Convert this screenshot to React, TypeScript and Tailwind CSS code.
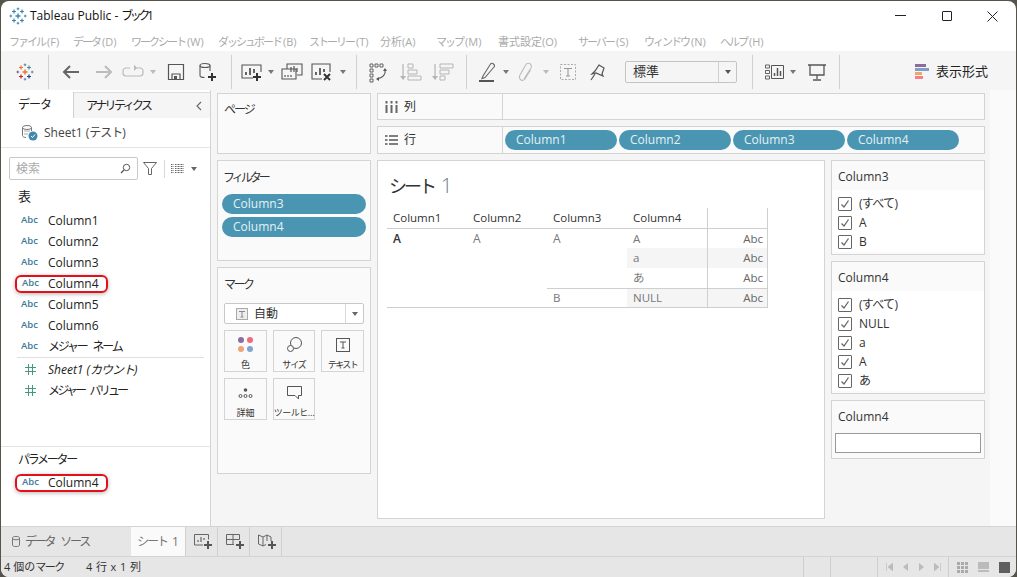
import React from "react";

const FONT = "[font-family:'Open_Sans','Noto_Sans_CJK_JP',sans-serif]";

function Cross({ x, y, r, c, w = 1.4 }: { x: number; y: number; r: number; c: string; w?: number }) {
  return <path d={`M${x - r} ${y}H${x + r}M${x} ${y - r}V${y + r}`} stroke={c} strokeWidth={w} fill="none" />;
}

function TableauLogo({ mono = false }: { mono?: boolean }) {
  const a = mono ? "#3f86ad" : "#e8762d";
  const b = mono ? "#3f86ad" : "#5b879b";
  const c = mono ? "#3f86ad" : "#c72035";
  const d = mono ? "#3f86ad" : "#1f447e";
  const e = mono ? "#3f86ad" : "#59879b";
  return (
    <svg width="18" height="18" viewBox="0 0 18 18">
      <Cross x={9} y={9} r={2.5} c={a} />
      <Cross x={5} y={4.5} r={2} c={a} w={1.2} />
      <Cross x={13} y={4.5} r={2} c={b} w={1.2} />
      <Cross x={5} y={13.5} r={2} c={c} w={1.2} />
      <Cross x={13} y={13.5} r={2} c={d} w={1.2} />
      <Cross x={9} y={1.8} r={1.3} c={e} w={1} />
      <Cross x={9} y={16.2} r={1.3} c={e} w={1} />
      <Cross x={1.8} y={9} r={1.3} c={mono ? a : "#7a4e7e"} w={1} />
      <Cross x={16.2} y={9} r={1.3} c={e} w={1} />
    </svg>
  );
}

function Caret({ ml = 0, color = "border-t-[#777]" }: { ml?: number; color?: string }) {
  return (
    <span
      style={{ marginLeft: ml }}
      className={`w-0 h-0 shrink-0 border-x-[3.5px] border-x-transparent border-t-[4px] ${color}`}
    />
  );
}

function Sep({ ml }: { ml: number }) {
  return <span style={{ marginLeft: ml }} className="w-px h-[34px] bg-[#d0d0d0] shrink-0" />;
}

function Ico({ ml, w = 24, children }: { ml: number; w?: number; children: React.ReactNode }) {
  return (
    <svg style={{ marginLeft: ml }} width={w} height="24" viewBox={`0 0 ${w} 24`} fill="none" className="shrink-0">
      {children}
    </svg>
  );
}

function MenuItem({ w, kana, rest, plain }: { w: string; kana: string; rest: string; plain?: boolean }) {
  return (
    <span className={w}>
      <span className={plain ? "" : "tracking-[-2px]"}>{kana}</span>
      <span className={plain ? "" : "ml-[2px]"}>{rest}</span>
    </span>
  );
}

function Toolbar() {
  return (
    <div className="h-[39px] bg-[#f5f5f5] flex items-center pt-[2px] shrink-0">
      <span className="ml-[15px] shrink-0 flex"><TableauLogo /></span>
      <Sep ml={14} />
      {/* back */}
      <Ico ml={10}><path d="M20 12H5M11 6l-6 6 6 6" stroke="#666" strokeWidth="2" /></Ico>
      {/* forward */}
      <Ico ml={9}><path d="M4 12h15M13 6l6 6-6 6" stroke="#bbb" strokeWidth="2" /></Ico>
      {/* loop */}
      <Ico ml={5}>
        <path d="M9 8H5a3 3 0 0 0-3 3v2a3 3 0 0 0 3 3h14a3 3 0 0 0 3-3v-2a3 3 0 0 0-3-3h-5" stroke="#bbb" strokeWidth="1.2" />
        <path d="M13 4.5 16 8l-3 3z" fill="#bbb" />
      </Ico>
      <Caret ml={5} color="border-t-[#bbb]" />
      {/* save */}
      <Ico ml={8}>
        <path d="M4.5 4.5h15v15h-15z" stroke="#555" strokeWidth="1.2" />
        <path d="M8 19v-5h8v5" stroke="#555" strokeWidth="1.2" />
        <path d="M10 16h3v3h-3z" fill="#555" />
      </Ico>
      {/* new data source */}
      <Ico ml={8}>
        <ellipse cx="9" cy="5.5" rx="5" ry="2" stroke="#555" strokeWidth="1.1" />
        <path d="M4 5.5v10c0 1.2 2 2 4.5 2M14 5.500V11" stroke="#555" strokeWidth="1.1" />
        <path d="M16 13v8M12 17h8" stroke="#333" strokeWidth="2" />
      </Ico>
      <Sep ml={11} />
      {/* new worksheet */}
      <Ico ml={8}>
        <path d="M13 18H2V5h19v7" stroke="#555" strokeWidth="1.1" />
        <path d="M6 15v-3M10 15V8M14 13V9" stroke="#555" strokeWidth="1.8" />
        <path d="M17 13v8M13 17h8" stroke="#333" strokeWidth="2" />
      </Ico>
      <Caret ml={4} />
      {/* duplicate */}
      <Ico ml={6}>
        <path d="M7 9V4h15v11h-5" stroke="#555" strokeWidth="1.1" />
        <path d="M2 9h14v10H2z" stroke="#555" strokeWidth="1.1" fill="#f5f5f5" />
        <path d="M11 12V7M14 12V6M17 12V8M5 17v-2M8 17v-2M11 17v-2" stroke="#555" strokeWidth="1.2" />
      </Ico>
      {/* clear */}
      <Ico ml={6}>
        <path d="M12 19H2V4h18v8" stroke="#555" strokeWidth="1.1" />
        <path d="M6 15v-3M10 15V8M14 12V9" stroke="#555" strokeWidth="1.8" />
        <path d="M14 14l6 6M20 14l-6 6" stroke="#333" strokeWidth="2" />
      </Ico>
      <Caret ml={6} />
      <Sep ml={10} />
      {/* swap */}
      <Ico ml={9}>
        <path d="M4 4h3v3H4zM9 4h3v3H9zM14 4h3v3h-3zM4 9h3v3H4zM4 14h3v3H4zM4 19h3v3H4z" stroke="#555" strokeWidth="0.9" />
        <path d="M19 10c1 4-2 8-8 9" stroke="#555" strokeWidth="1.1" />
        <path d="M17 11l2-3 2 3zM13 17v4l-3-2z" fill="#555" />
      </Ico>
      {/* sort asc */}
      <Ico ml={9}>
        <path d="M4 4v15" stroke="#b5b5b5" strokeWidth="1.2" />
        <path d="M1 16h6l-3 4z" fill="#b5b5b5" />
        <path d="M9 4h5v4H9zM9 10h9v4H9zM9 16h13v4H9z" stroke="#b5b5b5" strokeWidth="1" />
      </Ico>
      {/* sort desc */}
      <Ico ml={8}>
        <path d="M4 4v15" stroke="#b5b5b5" strokeWidth="1.2" />
        <path d="M1 16h6l-3 4z" fill="#b5b5b5" />
        <path d="M9 4h13v4H9zM9 10h9v4H9zM9 16h5v4H9z" stroke="#b5b5b5" strokeWidth="1" />
      </Ico>
      <Sep ml={11} />
      {/* highlight */}
      <Ico ml={8}>
        <path d="M8 16l-1 2.500 3-1L19 7c1-1 .5-2-.5-3s-2-1-3 0z" stroke="#666" strokeWidth="1.1" />
        <path d="M4 21h15" stroke="#555" strokeWidth="2" />
      </Ico>
      <Caret ml={4} />
      {/* clip */}
      <Ico ml={4} w={24}>
        <path d="M9 19l7-11c1-2 0-4-1.500-4.500S11 4 10 6l-5 9c-1 2-.5 4 1 5s3.500 0 4.500-2l5-8" stroke="#bbb" strokeWidth="1.1" transform="translate(2 0)" />
      </Ico>
      <Caret ml={6} color="border-t-[#bbb]" />
      {/* text box */}
      <Ico ml={7}>
        <path d="M4.500 4.500h15v15h-15z" stroke="#aaa" strokeWidth="1" strokeDasharray="2 1.500" />
        <path d="M8 8.500h8M12 8.500v7.500M10 16h4" stroke="#999" strokeWidth="1.100" />
      </Ico>
      {/* pin */}
      <Ico ml={6}>
        <path d="M14 4l5 3-2 6 1 2-7-3-4 1 3-3z" stroke="#555" strokeWidth="1.200" transform="translate(-1 1)" />
        <path d="M9 14l-4 6" stroke="#555" strokeWidth="1.200" />
      </Ico>
      {/* fit select */}
      <div className="ml-[15px] w-[112px] h-[22px] border border-[#c4c4c4] rounded-[2px] flex items-center shrink-0">
        <span className="flex-1 pl-[7px] text-[13px] text-[#333]">標準</span>
        <span className="w-[18px] h-full border-l border-[#d0d0d0] flex items-center justify-center">
          <Caret color="border-t-[#555]" />
        </span>
      </div>
      <Sep ml={15} />
      {/* show labels */}
      <Ico ml={11} w={22}>
        <path d="M1.500 5h4v3h-4zM1.500 10.500h4v3h-4zM1.500 16h4v3h-4z" stroke="#555" strokeWidth="0.900" />
        <path d="M7.500 5.500h12v13h-12z" stroke="#555" strokeWidth="1" />
        <path d="M10.500 16v-3M13.500 16V8M16.500 16v-5" stroke="#555" strokeWidth="1.500" />
      </Ico>
      <Caret ml={4} />
      {/* presentation */}
      <Ico ml={9}>
        <path d="M3 5h18M5 5v10h14V5M12 15v4M8 20h8" stroke="#555" strokeWidth="1.300" />
      </Ico>
      <Sep ml={10} />
      <div className="ml-[75px] flex items-center gap-[6px] shrink-0">
        <svg width="15" height="16" viewBox="0 0 15 16">
          <rect x="0" y="0" width="11" height="3" fill="#8a6d9e" />
          <rect x="0" y="4" width="14" height="3" fill="#7f9fc6" />
          <rect x="0" y="8" width="7" height="3" fill="#efa56e" />
          <rect x="0" y="12" width="8" height="3" fill="#f47f85" />
        </svg>
        <span className="text-[13px] text-[#222]">表示形式</span>
      </div>
    </div>
  );
}

function AbcIcon() {
  return <span className="w-[32px] pl-[5px] text-[9.5px] font-semibold text-[#3d7a99] shrink-0">Abc</span>;
}

function HashIcon() {
  return (
    <span className="w-[32px] pl-[9px] shrink-0 flex">
      <svg width="11" height="11" viewBox="0 0 11 11">
        <path d="M0 3.500h11M0 7.500h11M3.500 0v11M7.500 0v11" stroke="#459a7c" strokeWidth="1" />
      </svg>
    </span>
  );
}

function FieldRow({ name, hot, kana }: { name: string; hot?: boolean; kana?: boolean }) {
  return (
    <div className="h-[21px] flex items-center text-[12px] text-[#222] pl-[15px]">
      <div
        className={
          hot
            ? "h-[18px] w-[93px] -ml-px flex items-center border-2 border-[#e3101a] rounded-[6px] shadow-[0_1px_4px_rgba(0,0,0,0.3)] pl-[5px] -mr-px [&>span:first-child]:w-[26px] [&>span:first-child]:pl-0"
            : "flex items-center"
        }
      >
        <AbcIcon />
        <span className={kana ? "whitespace-nowrap tracking-[-2.200px] [word-spacing:5px]" : "whitespace-nowrap"}>{name}</span>
      </div>
    </div>
  );
}

function DataPane() {
  return (
    <div className="w-[210px] bg-white border-r border-[#d4d4d4] flex flex-col shrink-0">
      <div className="mt-[2px] h-[26px] flex text-[12px] text-[#222]">
        <div className="w-[73px] pl-[17px] flex items-center border-r border-[#d0d0d0] tracking-[-1px]">データ</div>
        <div className="flex-1 flex items-center pl-[12px] bg-[#f5f5f5] border-t border-[#dcdcdc]">
          <span className="flex-1 tracking-[-2.600px]">アナリティクス</span>
          <svg width="8" height="10" viewBox="0 0 8 10" className="mr-[7px]">
            <path d="M6 1 2 5l4 4" stroke="#666" strokeWidth="1.100" fill="none" />
          </svg>
        </div>
      </div>
      <div className="h-[30px] flex items-center pl-[20px] border-b border-[#e4e4e4] text-[12px] text-[#444] shrink-0">
        <svg width="18" height="18" viewBox="0 0 18 18" className="mr-[5px]">
          <ellipse cx="6" cy="3.500" rx="4.500" ry="2" stroke="#777" fill="none" />
          <path d="M1.500 3.500v8c0 1 1.500 2 3.500 2M10.500 3.500V7" stroke="#777" fill="none" />
          <path d="M3 7h6M3 10h4" stroke="#aaa" />
          <circle cx="12" cy="12" r="4.500" fill="#3d88ad" />
          <path d="M10 12l1.500 1.500L14 10.500" stroke="#fff" fill="none" />
        </svg>
        <span>Sheet1 (<span className="tracking-[-1px]">テスト</span>)</span>
      </div>
      <div className="h-[23px] mt-[9px] flex items-center shrink-0">
        <div className="ml-[8px] w-[129px] h-[23px] border border-[#c8c8c8] rounded-[2px] flex items-center px-[6px] text-[12px] text-[#aaa]">
          <span className="flex-1">検索</span>
          <svg width="11" height="11" viewBox="0 0 11 11">
            <circle cx="6.500" cy="4.500" r="3.200" stroke="#555" fill="none" />
            <path d="M4 7 1 10" stroke="#555" strokeWidth="1.300" />
          </svg>
        </div>
        <svg width="14" height="13" viewBox="0 0 14 13" className="ml-[5px]">
          <path d="M.5.500h13L8.500 6.500v6h-3v-6z" stroke="#666" fill="none" />
        </svg>
        <span className="ml-[7px] w-px h-[18px] bg-[#d8d8d8]" />
        <svg width="13" height="9" viewBox="0 0 13 9" className="ml-[6px]">
          <path d="M0 .500h3M4 .500h9M0 2.500h3M4 2.500h9M0 4.500h3M4 4.500h9M0 6.500h3M4 6.500h9M0 8.500h3M4 8.500h9" stroke="#666" strokeWidth="1" strokeDasharray="1 .500" />
        </svg>
        <span className="ml-[7px] flex"><Caret color="border-t-[#666]" /></span>
      </div>
      <div className="mt-[7px] h-[20px] pl-[17px] text-[13px] text-[#222] flex items-center">表</div>
      <div className="mt-[3px] flex flex-col">
        <FieldRow name="Column1" />
        <FieldRow name="Column2" />
        <FieldRow name="Column3" />
        <FieldRow name="Column4" hot />
        <FieldRow name="Column5" />
        <FieldRow name="Column6" />
        <FieldRow name="メジャー ネーム" kana />
      </div>
      <div className="mx-[16px] mr-[6px] h-px bg-[#e0e0e0]" />
      <div className="mt-px flex flex-col text-[12px] text-[#222]">
        <div className="h-[21px] pl-[15px] flex items-center">
          <HashIcon />
          <i>Sheet1 (<span className="tracking-[-1px]">カウント</span>)</i>
        </div>
        <div className="h-[21px] pl-[15px] flex items-center">
          <HashIcon />
          <span className="tracking-[-2.800px] [word-spacing:5px]">メジャー バリュー</span>
        </div>
      </div>
      <div className="flex-1" />
      <div className="h-[80px] border-t border-[#e4e4e4] shrink-0">
        <div className="mt-[2px] h-[21px] pl-[17px] text-[12px] text-[#222] flex items-center tracking-[-2.300px]">パラメーター</div>
        <div className="mt-[2px]"><FieldRow name="Column4" hot /></div>
      </div>
    </div>
  );
}

function Card({ className = "", children }: { className?: string; children?: React.ReactNode }) {
  return <div className={`bg-[#fafafa] border border-[#d4d4d4] shrink-0 ${className}`}>{children}</div>;
}

function Pill({ name, w }: { name: string; w: string }) {
  return (
    <div className={`${w} h-[20px] rounded-full bg-[#4a96b2] text-[#e4f1f6] text-[12px] pl-[11px] flex items-center shrink-0`}>
      {name}
    </div>
  );
}

function MarkBtn({ label, track, children }: { label: string; track?: string; children: React.ReactNode }) {
  return (
    <div className="h-[42px] border border-[#d4d4d4] flex flex-col items-center pt-[3px]">
      <span className="h-[22px] flex items-center">{children}</span>
      <span className={`mt-[2px] text-[9px] text-[#333] whitespace-nowrap ${track ?? ""}`}>{label}</span>
    </div>
  );
}

function ShelvesPane() {
  return (
    <div className="w-[154px] ml-[6px] mt-[3px] flex flex-col gap-[6px] shrink-0">
      <Card className="h-[61px]">
        <div className="pl-[6px] pt-[7px] text-[12px] text-[#333] tracking-[-2px]">ページ</div>
      </Card>
      <Card className="h-[101px]">
        <div className="pl-[5px] pt-[8px] h-[33px] text-[12px] text-[#333] tracking-[-3px]">フィルター</div>
        <div className="px-[4px] flex flex-col gap-[3px]">
          <Pill name="Column3" w="w-[144px]" />
          <Pill name="Column4" w="w-[144px]" />
        </div>
      </Card>
      <Card className="h-[207px]">
        <div className="pl-[6px] pt-[8px] h-[35px] text-[12px] text-[#333] tracking-[-2.500px]">マーク</div>
        <div className="mx-[6px] h-[21px] border border-[#c8c8c8] rounded-[2px] bg-white flex items-center">
          <span className="flex-1 flex items-center pl-[11px] text-[12px] text-[#333] gap-[6px]">
            <svg width="12" height="12" viewBox="0 0 12 12">
              <rect x=".5" y=".5" width="11" height="11" fill="#eee" stroke="#aaa" />
              <path d="M3 3.500h6M6 3.500v5.500M4.500 9h3" stroke="#888" />
            </svg>
            自動
          </span>
          <span className="w-[18px] h-full border-l border-[#d8d8d8] flex items-center justify-center">
            <Caret color="border-t-[#666]" />
          </span>
        </div>
        <div className="mx-[6px] mt-[6px] grid grid-cols-[43px_42px_43px] gap-x-[6px] gap-y-[6px]">
          <MarkBtn label="色">
            <svg width="15" height="15" viewBox="0 0 15 15">
              <circle cx="3" cy="3" r="3" fill="#8a6d9e" />
              <circle cx="12" cy="3" r="3" fill="#f0697f" />
              <circle cx="3" cy="12" r="3" fill="#f0a47a" />
              <circle cx="12" cy="12" r="3" fill="#7fa4d1" />
            </svg>
          </MarkBtn>
          <MarkBtn label="サイズ" track="tracking-[-1px]">
            <svg width="15" height="15" viewBox="0 0 15 15">
              <circle cx="9" cy="6" r="5.500" stroke="#555" fill="none" />
              <circle cx="3.500" cy="11.500" r="3" stroke="#555" fill="#fafafa" />
            </svg>
          </MarkBtn>
          <MarkBtn label="テキスト" track="tracking-[-1.500px]">
            <svg width="14" height="14" viewBox="0 0 14 14">
              <rect x=".5" y=".5" width="13" height="13" stroke="#555" fill="none" />
              <path d="M4 4h6M7 4v6M5.500 10h3" stroke="#555" />
            </svg>
          </MarkBtn>
          <MarkBtn label="詳細">
            <svg width="15" height="12" viewBox="0 0 15 12">
              <circle cx="7.500" cy="3" r="1.800" fill="#555" />
              <circle cx="2.500" cy="9" r="1.500" stroke="#555" fill="none" />
              <circle cx="7.500" cy="9" r="1.500" stroke="#555" fill="none" />
              <circle cx="12.500" cy="9" r="1.500" stroke="#555" fill="none" />
            </svg>
          </MarkBtn>
          <MarkBtn label="ツールヒ…" track="tracking-[-.5px]">
            <svg width="15" height="14" viewBox="0 0 15 14">
              <path d="M.5.500h14v9h-3v3.500l-3.500-3.500H.5z" stroke="#555" fill="none" />
            </svg>
          </MarkBtn>
        </div>
      </Card>
    </div>
  );
}

function Shelf({ h, icon, label, children }: { h: string; icon: React.ReactNode; label: string; children?: React.ReactNode }) {
  return (
    <Card className={`${h} flex`}>
      <div className="w-[125px] border-r border-[#d4d4d4] flex items-center pl-[7px] gap-[6px] text-[12px] text-[#333] shrink-0">
        {icon}
        <span>{label}</span>
      </div>
      <div className="flex-1 flex items-center gap-[2px] pl-[2px]">{children}</div>
    </Card>
  );
}

function VizTable() {
  const head = "h-[21px] border-b border-[#cfcfcf] pl-[6px] flex items-center text-[11.5px] text-[#333]";
  const cell = "pl-[6px] flex items-center text-[11.5px] text-[#777]";
  const abc = "border-x border-[#cfcfcf] pr-[4px] flex items-center justify-end text-[11.5px] text-[#666]";
  return (
    <div className="ml-[9px] mt-[8px] w-[381px] grid grid-cols-[80px_80px_80px_80px_61px] grid-rows-[21px_19px_20px_20px_19px] border-b border-[#cfcfcf]">
      <div className={head}>Column1</div>
      <div className={head}>Column2</div>
      <div className={head}>Column3</div>
      <div className={head}>Column4</div>
      <div className="border-x border-b border-[#cfcfcf]" />
      <div className="row-span-4 pl-[6px] pt-[1px] text-[12px] font-semibold text-[#333]">A</div>
      <div className="row-span-4 pl-[6px] pt-[1px] text-[12px] text-[#777]">A</div>
      <div className="row-span-3 pl-[6px] pt-[1px] text-[12px] text-[#777]">A</div>
      <div className={cell}>A</div>
      <div className={abc}>Abc</div>
      <div className={`${cell} bg-[#f5f5f5]`}>a</div>
      <div className={`${abc} bg-[#f5f5f5]`}>Abc</div>
      <div className={cell}>あ</div>
      <div className={abc}>Abc</div>
      <div className={`${cell} border-t border-[#cfcfcf]`}>B</div>
      <div className={`${cell} bg-[#f5f5f5] border-t border-[#cfcfcf]`}>NULL</div>
      <div className={`${abc} bg-[#f5f5f5] border-t border-t-[#cfcfcf]`}>Abc</div>
    </div>
  );
}

function Check({ label }: { label: string }) {
  return (
    <div className="h-[19px] flex items-center pl-[6px] text-[12px] text-[#333]">
      <span className="w-[14px] h-[14px] border border-[#666] rounded-[1px] bg-white flex items-center justify-center mr-[7px] shrink-0">
        <svg width="10" height="10" viewBox="0 0 10 10">
          <path d="M1.500 5.500 4 8l4.500-6.500" stroke="#666" strokeWidth="1.300" fill="none" />
        </svg>
      </span>
      <span className={label === "(すべて)" ? "tracking-[-.7px]" : ""}>{label}</span>
    </div>
  );
}

function FilterCard({ title, items, h }: { title: string; items: string[]; h: string }) {
  return (
    <Card className={h}>
      <div className="h-[29px] pl-[6px] pt-[2px] flex items-center text-[12px] text-[#333]">{title}</div>
      <div className="bg-white pb-[1px] flex flex-col pt-[4px]">
        {items.map((t) => (
          <Check key={t} label={t} />
        ))}
      </div>
    </Card>
  );
}

function Center() {
  return (
    <div className="w-[608px] ml-[6px] mt-[3px] flex flex-col gap-[6px] shrink-0">
      <Shelf
        h="h-[27px]"
        label="列"
        icon={
          <svg width="13" height="12" viewBox="0 0 13 12">
            <path d="M1.500 4v8M6.500 4v8M11.500 4v8" stroke="#666" strokeWidth="2" />
            <path d="M1.500 0v2.500M6.500 0v2.500M11.500 0v2.500" stroke="#666" strokeWidth="2" />
          </svg>
        }
      />
      <Shelf
        h="h-[28px]"
        label="行"
        icon={
          <svg width="13" height="10" viewBox="0 0 13 10">
            <path d="M0 1h2.500M4 1h9M0 5h2.500M4 5h9M0 9h2.500M4 9h9" stroke="#555" strokeWidth="1.600" />
          </svg>
        }
      >
        <Pill name="Column1" w="w-[112px]" />
        <Pill name="Column2" w="w-[112px]" />
        <Pill name="Column3" w="w-[112px]" />
        <Pill name="Column4" w="w-[112px]" />
      </Shelf>
      <div className="flex gap-[6px]">
        <div className="w-[448px] h-[359px] bg-white border border-[#d4d4d4] shrink-0">
          <div className="mt-[11px] pl-[11px] h-[28px] flex items-center text-[18px] text-[#333]">
            <span className="tracking-[-3px]">シート</span>
            <span className="ml-[7px] text-[#6b7b80] text-[20px] font-light">1</span>
          </div>
          <VizTable />
        </div>
        <div className="w-[154px] flex flex-col gap-[6px] shrink-0">
          <FilterCard title="Column3" h="h-[95px]" items={["(すべて)", "A", "B"]} />
          <FilterCard title="Column4" h="h-[133px]" items={["(すべて)", "NULL", "a", "A", "あ"]} />
          <Card className="h-[59px]">
            <div className="h-[32px] pl-[6px] flex items-center text-[12px] text-[#333]">Column4</div>
            <div className="ml-[3px] w-[146px] h-[20px] bg-white border border-[#999]" />
          </Card>
        </div>
      </div>
    </div>
  );
}

function TabAdd({ children }: { children: React.ReactNode }) {
  return (
    <div className="w-[32px] h-full border-r border-[#d0d0d0] flex items-center justify-center pl-[3px] shrink-0">
      <svg width="20" height="18" viewBox="0 0 20 18" fill="none">
        {children}
        <path d="M15 8v8M11 12h8" stroke="#555" strokeWidth="2" />
      </svg>
    </div>
  );
}

function TabBar() {
  return (
    <div className="h-[30px] bg-[#e6e6e6] border-t border-[#d4d4d4] flex items-stretch shrink-0">
      <div className="w-[130px] flex items-center pl-[11px] gap-[5px] text-[12px] text-[#666]">
        <svg width="8" height="11" viewBox="0 0 8 11">
          <path d="M.5 2v7c0 1 1 1.500 3.500 1.500S7.500 10 7.500 9V2C7.500 1 6.500.5 4 .5S.5 1 .5 2zM.5 3c1 1 6 1 7 0" stroke="#777" fill="none" />
        </svg>
        <span className="tracking-[-2.200px] [word-spacing:5px]">データ ソース</span>
      </div>
      <div className="w-[55px] bg-[#fafafa] flex items-center justify-center text-[12px] text-[#777] border-r border-[#d0d0d0]">
        <span className="tracking-[-2px]">シート</span>
        <span className="ml-[5px]">1</span>
      </div>
      <TabAdd>
        <path d="M1.500 1.500h14v5M10 12H1.500V1.500" stroke="#666" />
        <path d="M5 9V7M8 9V4M11 7V5" stroke="#666" strokeWidth="1.200" />
      </TabAdd>
      <TabAdd>
        <path d="M1.500 1.500h13v5M1.500 1.500v10H9M1.500 6.500h13M8 1.500v10" stroke="#666" />
      </TabAdd>
      <TabAdd>
        <path d="M1.500 2 6 4l4-2 4 2v4M1.500 2v9L6 13l3-1.500M6 4v9M10 2v6" stroke="#666" />
      </TabAdd>
    </div>
  );
}

function StatusBar() {
  return (
    <div className="h-[21px] bg-[#e6e6e6] border-t border-[#d4d4d4] rounded-b-[8px] flex items-stretch text-[11px] text-[#333] shrink-0">
      <div className="w-[802px] flex items-center pl-[3px]">
        <span className="w-[82px]">4 個の<span className="tracking-[-1.500px]">マーク</span></span>
        <span className="tracking-[.4px]">4 行 x 1 列</span>
      </div>
      <div className="w-[27px] border-l border-[#cfcfcf]" />
      <div className="w-[47px] border-l border-[#cfcfcf]" />
      <div className="w-[71px] border-l border-[#cfcfcf] flex items-center justify-center gap-[9px]">
        <svg width="7" height="8" viewBox="0 0 7 8"><path d="M.5 0v8M7 0v8L2 4z" fill="#bbb" stroke="#bbb" strokeWidth=".6" /></svg>
        <svg width="7" height="8" viewBox="0 0 7 8"><path d="M6 0v8L1 4z" fill="#bbb" /></svg>
        <svg width="7" height="8" viewBox="0 0 7 8"><path d="M1 0v8l5-4z" fill="#bbb" /></svg>
        <svg width="7" height="8" viewBox="0 0 7 8"><path d="M6.500 0v8M0 0v8l5-4z" fill="#bbb" stroke="#bbb" strokeWidth=".6" /></svg>
      </div>
      <div className="flex-1 border-l border-[#cfcfcf] flex items-center pl-[8px] gap-[10px]">
        <span className="grid grid-cols-3 gap-px w-[11px]">
          {Array.from({ length: 9 }).map((_, i) => (
            <span key={i} className="w-[3px] h-[3px] bg-[#aaa]" />
          ))}
        </span>
        <span className="flex flex-col gap-px w-[11px]">
          <span className="h-[7px] bg-[#bbb]" />
          <span className="h-[2px] bg-[#bbb]" />
        </span>
        <span className="w-[11px] h-[11px] bg-[#5f5f5f]" />
      </div>
    </div>
  );
}

export default function App() {
  return (
    <div lang="ja" className={`${FONT} w-[1017px] h-[577px] bg-[#56544a] overflow-hidden pt-px px-px`}>
      <div className="h-full bg-white rounded-t-[8px] rounded-b-[8px] flex flex-col overflow-hidden">
        {/* title bar */}
        <div className="h-[33px] pb-[3px] flex items-center shrink-0">
          <span className="ml-[8px] flex"><TableauLogo mono /></span>
          <span className="ml-[3px] text-[12px] text-[#111]">Tableau Public - <span className="tracking-[-3.500px]">ブック</span><span>1</span></span>
          <div className="flex-1" />
          <svg width="11" height="2" viewBox="0 0 11 2" className="mr-[36px]">
            <rect width="11" height="1" fill="#222" />
          </svg>
          <span className="w-[10px] h-[10px] border border-[#222] rounded-[1px] mr-[35px]" />
          <svg width="11" height="11" viewBox="0 0 11 11" className="mr-[18px]">
            <path d="M.5.5l10 10M10.500.5l-10 10" stroke="#222" />
          </svg>
        </div>
        {/* menu */}
        <div className="h-[17px] flex items-center pl-[8px] text-[11px] text-[#aaa] shrink-0 whitespace-nowrap">
          <MenuItem w="w-[64px]" kana="ファイル" rest="(F)" />
          <MenuItem w="w-[58px]" kana="データ" rest="(D)" />
          <MenuItem w="w-[87px]" kana="ワークシート" rest="(W)" />
          <MenuItem w="w-[91px]" kana="ダッシュボード" rest="(B)" />
          <MenuItem w="w-[71px]" kana="ストーリー" rest="(T)" />
          <MenuItem w="w-[56px]" kana="分析" rest="(A)" plain />
          <MenuItem w="w-[62px]" kana="マップ" rest="(M)" />
          <MenuItem w="w-[80px]" kana="書式設定" rest="(O)" plain />
          <MenuItem w="w-[66px]" kana="サーバー" rest="(S)" />
          <MenuItem w="w-[76px]" kana="ウィンドウ" rest="(N)" />
          <MenuItem w="" kana="ヘルプ" rest="(H)" />
        </div>
        <Toolbar />
        {/* main */}
        <div className="flex-1 min-h-0 flex bg-[#f5f5f5]">
          <DataPane />
          <ShelvesPane />
          <Center />
          <div className="ml-[5px] flex-1 bg-[#fafafa]" />
        </div>
        <TabBar />
        <StatusBar />
      </div>
    </div>
  );
}
